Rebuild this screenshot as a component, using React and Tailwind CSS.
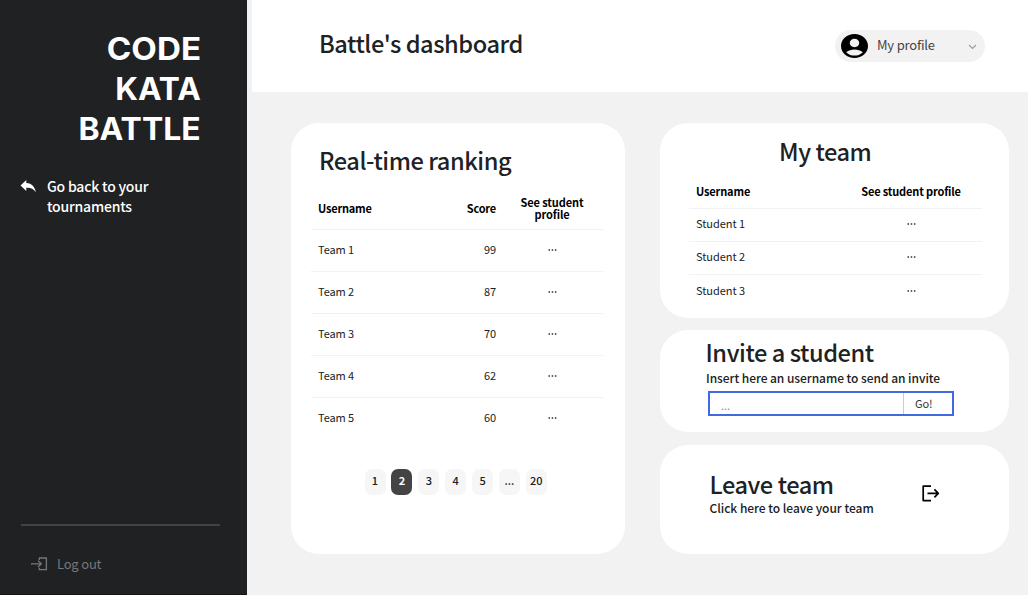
import React from "react";

const teams = [
  ["Team 1", "99"],
  ["Team 2", "87"],
  ["Team 3", "70"],
  ["Team 4", "62"],
  ["Team 5", "60"],
];
const students = ["Student 1", "Student 2", "Student 3"];
const pages = ["1", "2", "3", "4", "5", "...", "20"];

function Heading({ children, className = "" }) {
  return (
    <h2 className={"whitespace-nowrap text-[23.6px] leading-[32px] font-medium tracking-[-0.44px] text-[#202123] " + className}>
      {children}
    </h2>
  );
}

function Dots() {
  return (
    <svg width="9" height="2" viewBox="0 0 9 2" fill="#222">
      <rect x="0.5" y="0.3" width="1.5" height="1.4" />
      <rect x="3.7" y="0.3" width="1.5" height="1.4" />
      <rect x="6.9" y="0.3" width="1.5" height="1.4" />
    </svg>
  );
}

function Sidebar() {
  return (
    <aside className="flex h-full w-[247px] flex-col border-b border-[#17141a] bg-[#202123] text-white">
      <div className="flex flex-col items-end pt-[29px] pr-[46px] font-['Inter',sans-serif] text-[31px] leading-[40px] font-bold">
        <span className="origin-right scale-x-[1.07]">CODE</span>
        <span className="origin-right scale-x-[1.02]">KATA</span>
        <span className="origin-right scale-x-[1.03]">BATTLE</span>
      </div>
      <div className="mt-[27px] flex pl-[20px]">
        <svg className="mt-[4px]" width="17" height="13" viewBox="0 0 17 13" fill="#fff">
          <path d="M6.3 0 L0.5 5.4 L6.3 11 V7.7 C10.5 7.4 13.6 8.7 15.8 12.3 C15 7.2 12 3.4 6.3 3.1 Z" />
        </svg>
        <p className="ml-[10px] text-[14px] leading-[20px] font-medium tracking-[-0.2px]">
          Go back to your
          <br />
          tournaments
        </p>
      </div>
      <div className="mt-auto ml-[21px] h-[2px] w-[199px] bg-[#424345]" />
      <div className="mt-[28px] mb-[20px] flex h-[20px] items-center pl-[31px] text-[#77787a]">
        <svg width="17" height="14" viewBox="0 0 17 14" fill="none" stroke="currentColor" strokeWidth="1.3" strokeLinejoin="round">
          <path d="M0 6.8H10M7 3.6L10.3 6.8L7 10M8.3 3V1H15.4V12.7H8.3V10.7" />
        </svg>
        <span className="ml-[9px] text-[13px] leading-[20px] tracking-[-0.2px]">Log out</span>
      </div>
    </aside>
  );
}

function Header() {
  return (
    <header className="flex h-[92px] justify-between bg-white pr-[43px] pl-[67px]">
      <Heading className="mt-[27px]">Battle's dashboard</Heading>
      <button className="mt-[30px] flex h-[32px] w-[150px] items-center rounded-full bg-[#f2f2f2] pr-[8px] pl-[6px]">
        <svg width="27" height="24" viewBox="2 2 20 20" preserveAspectRatio="none">
          <path d="M12 2C6.48 2 2 6.48 2 12s4.48 10 10 10 10-4.48 10-10S17.52 2 12 2zm0 4c1.93 0 3.5 1.57 3.5 3.5S13.93 13 12 13s-3.5-1.57-3.5-3.5S10.07 6 12 6zm0 14c-2.03 0-4.43-.82-6.14-2.88C7.55 15.8 9.68 15 12 15s4.45.8 6.14 2.12C16.43 19.18 14.03 20 12 20z" />
        </svg>
        <span className="mb-[2px] ml-[9px] text-[13px] leading-[20px] tracking-[-0.2px] text-[#444]">My profile</span>
        <svg className="mt-[2px] ml-auto" width="9" height="6" viewBox="0 0 9 6" fill="none" stroke="#999" strokeWidth="1.1">
          <path d="M1 1L4.5 4.5L8 1" />
        </svg>
      </button>
    </header>
  );
}

function Ranking() {
  return (
    <section className="flex h-[431px] w-[334px] flex-col rounded-[28px] bg-white pt-[21px] pr-[22px] pl-[20px]">
      <Heading className="ml-[8px]">Real-time ranking</Heading>
      <div className="mt-[11px] flex h-[43px] items-center border-b border-[#f2f2f2] pl-[7px] text-[11px] leading-[12px] font-bold tracking-[-0.2px] text-black">
        <span className="w-[100px]">Username</span>
        <span className="w-[78px] text-right">Score</span>
        <span className="ml-[16px] flex w-[80px] flex-col items-center tracking-[-0.1px]">
          <span>See student</span>
          <span>profile</span>
        </span>
      </div>
      {teams.map(([name, score]) => (
        <div key={name} className="flex h-[42px] items-center border-b border-[#f2f2f2] pb-[2px] pl-[7px] text-[11px] leading-[16px] tracking-[-0.1px] text-[#202123] last-of-type:border-0 last-of-type:pb-[3px]">
          <span className="mb-[1px] w-[100px]">{name}</span>
          <span className="mb-[1px] w-[78px] text-right">{score}</span>
          <span className="ml-[16px] flex w-[80px] justify-center"><Dots /></span>
        </div>
      ))}
      <nav className="mt-[28.5px] ml-[53.5px] flex gap-[5.9px] text-[11px] leading-[16px] text-[#202123]">
        {pages.map((p) => (
          <span
            key={p}
            className={
              "flex h-[26px] w-[21px] items-center justify-center rounded-[7px] pb-[3px] " +
              (p === "2" ? "bg-[#444] font-bold text-white" : "bg-[#f6f6f6] font-medium")
            }
          >
            {p}
          </span>
        ))}
      </nav>
    </section>
  );
}

function Team() {
  return (
    <section className="flex h-[194.5px] flex-col rounded-[28px] bg-white pt-[12px] pr-[27px] pl-[29px]">
      <Heading className="ml-[90px]">My team</Heading>
      <div className="mt-[7px] flex h-[35px] items-center border-b border-[#f2f2f2] pb-px pl-[7px] text-[11px] leading-[16px] font-bold tracking-[-0.15px] text-black">
        <span className="w-[155px]">Username</span>
        <span className="w-[120px] text-center whitespace-nowrap">See student profile</span>
      </div>
      {students.map((s) => (
        <div key={s} className="flex h-[33px] items-center border-b border-[#f2f2f2] pb-[2px] pl-[7px] text-[11px] leading-[16px] tracking-[-0.05px] text-[#202123] last-of-type:border-0">
          <span className="mb-[2px] w-[155px]">{s}</span>
          <span className="flex w-[120px] justify-center"><Dots /></span>
        </div>
      ))}
    </section>
  );
}

function Invite() {
  return (
    <section className="flex h-[102px] flex-col rounded-[28px] bg-white pt-[6px] pl-[46px]">
      <Heading className="ml-[-0.5px]">Invite a student</Heading>
      <p className="mt-px text-[12px] leading-[18px] font-medium tracking-[-0.05px] whitespace-nowrap text-[#202123]">Insert here an username to send an invite</p>
      <div className="mt-[4px] ml-[2px] flex h-[25px] w-[246px] border-2 border-[#4169e1] text-[11px] leading-[20px] tracking-[-0.1px] text-[#333]">
        <span className="w-[194px] border-r border-[#ccc] pt-[2px] pl-[11px] text-[#888]">...</span>
        <span className="pl-[11px]">Go!</span>
      </div>
    </section>
  );
}

function Leave() {
  return (
    <section className="flex h-[109px] rounded-[28px] bg-white pt-[23px] pl-[50px]">
      <div className="w-[212px]">
        <Heading className="ml-[-0.5px]">Leave team</Heading>
        <p className="mt-[-1px] ml-[-0.5px] text-[12px] leading-[18px] font-medium tracking-[-0.03px] whitespace-nowrap text-[#202123]">Click here to leave your team</p>
      </div>
      <svg className="mt-[17px]" width="18" height="17" viewBox="0 0 18 17" fill="none" stroke="#000" strokeWidth="1.7" strokeLinejoin="round">
        <path d="M9 1.2H1.2V15.6H9M5.5 8.4H16.2M12.4 4.4L16.3 8.4L12.4 12.4" />
      </svg>
    </section>
  );
}

export default function App() {
  return (
    <div className="flex h-[595px] w-[1028px] gap-[5px] overflow-hidden bg-[#f2f2f2] font-['Noto_Sans_CJK_SC',sans-serif]">
      <Sidebar />
      <div className="flex-1">
        <Header />
        <main className="flex gap-[35px] pt-[31px] pl-[39px]">
          <Ranking />
          <div className="flex w-[349px] flex-col justify-between">
            <Team />
            <Invite />
            <Leave />
          </div>
        </main>
      </div>
    </div>
  );
}
